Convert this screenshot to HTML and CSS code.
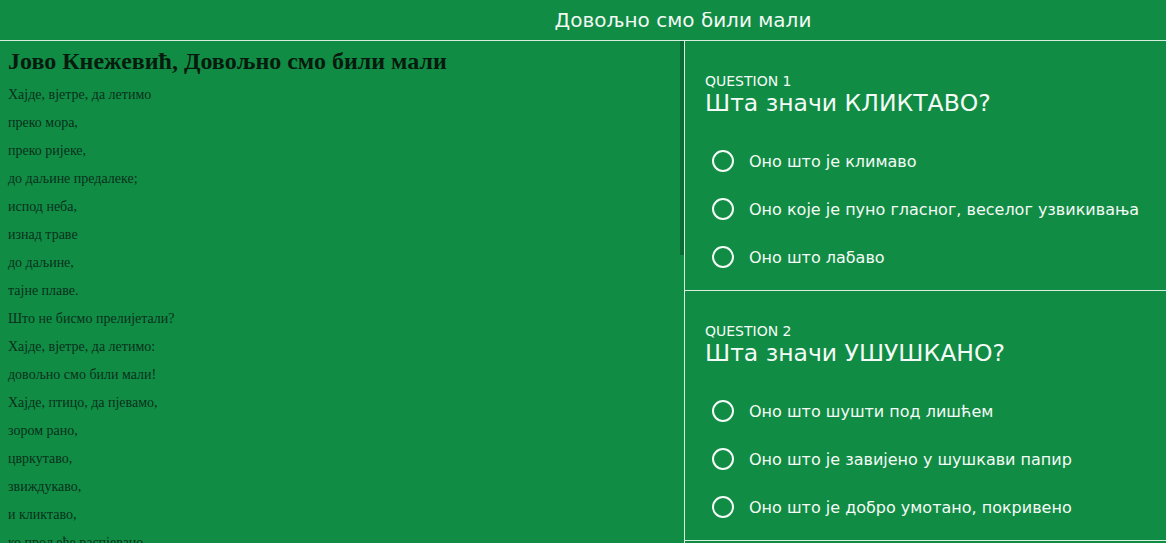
FILE: index.html
```html
<!DOCTYPE html>
<html lang="sr">
<head>
    <meta charset="UTF-8">
    <meta name="viewport" content="width=device-width, initial-scale=1.0">
    <title>Довољно смо били мали</title>
    <link rel="stylesheet" href="styles.css">
</head>
<body>
    <header class="top-bar">
        <h1 class="top-title">Довољно смо били мали</h1>
    </header>

    <main class="layout">
        <section class="reading">
            <h2 class="reading-title">Јово Кнежевић, Довољно смо били мали</h2>
            <div class="poem">
                <p>Хајде, вјетре, да летимо</p>
                <p>преко мора,</p>
                <p>преко ријеке,</p>
                <p>до даљине предалеке;</p>
                <p>испод неба,</p>
                <p>изнад траве</p>
                <p>до даљине,</p>
                <p>тајне плаве.</p>
                <p>Што не бисмо прелијетали?</p>
                <p>Хајде, вјетре, да летимо:</p>
                <p>довољно смо били мали!</p>
                <p>Хајде, птицо, да пјевамо,</p>
                <p>зором рано,</p>
                <p>цвркутаво,</p>
                <p>звиждукаво,</p>
                <p>и кликтаво,</p>
                <p>ко прољеће распјевано.</p>
            </div>
        </section>
        <span class="scroll-thumb"></span>

        <section class="quiz">
            <div class="question">
                <div class="question-label">QUESTION 1</div>
                <div class="question-text">Шта значи КЛИКТАВО?</div>
                <ul class="answers">
                    <li class="answer"><span class="radio"></span>Оно што је климаво</li>
                    <li class="answer"><span class="radio"></span>Оно које је пуно гласног, веселог узвикивања</li>
                    <li class="answer"><span class="radio"></span>Оно што лабаво</li>
                </ul>
            </div>

            <div class="question">
                <div class="question-label">QUESTION 2</div>
                <div class="question-text">Шта значи УШУШКАНО?</div>
                <ul class="answers">
                    <li class="answer"><span class="radio"></span>Оно што шушти под лишћем</li>
                    <li class="answer"><span class="radio"></span>Оно што је завијено у шушкави папир</li>
                    <li class="answer"><span class="radio"></span>Оно што је добро умотано, покривено</li>
                </ul>
            </div>
        </section>
    </main>
</body>
</html>
```

FILE: styles.css
```css
html, body {
    height: 100%;
}

body {
    margin: 0;
    background-color: #118c45;
    color: #f4fbf6;
    font-family: "DejaVu Sans", Verdana, sans-serif;
    overflow: hidden;
}

.top-bar {
    height: 40px;
    border-bottom: 1px solid #d8efe0;
    padding-left: 200px;
    display: flex;
    align-items: center;
    justify-content: center;
}

.top-title {
    margin: 0;
    font-size: 20px;
    font-weight: normal;
    color: #f1faf4;
}

.layout {
    display: flex;
    height: 502px;
    position: relative;
}

.reading {
    width: 685px;
    flex-shrink: 0;
    box-sizing: border-box;
    border-right: 1px solid #d8efe0;
    overflow: hidden;
    padding: 0 8px;
    font-family: "Liberation Serif", "Times New Roman", serif;
    color: #07301a;
}

/* scrollbar of the poem panel */
.scroll-thumb {
    position: absolute;
    left: 680px;
    top: 0;
    width: 4px;
    height: 214px;
    background: #0b6a34;
}

.reading-title {
    margin: 7px 0 12px;
    font-size: 24px;
    line-height: 27px;
    color: #061a0d;
}

.poem p {
    margin: 12px 0;
    font-size: 14px;
    line-height: 16px;
}

.quiz {
    flex: 1;
    min-width: 0;
    overflow: hidden;
}

.question {
    height: 250px;
    border-bottom: 1px solid #d8efe0;
    padding: 32px 20px 0;
    box-sizing: border-box;
}

.question-label {
    font-size: 14px;
    line-height: 16px;
}

.question-text {
    font-size: 23.5px;
    line-height: 28px;
}

.answers {
    list-style: none;
    margin: 20px 0 0;
    padding: 0 0 0 7px;
}

.answer {
    height: 48px;
    display: flex;
    align-items: center;
    font-size: 16px;
    white-space: nowrap;
}

.radio {
    width: 18px;
    height: 18px;
    border: 2px solid #f4fbf6;
    border-radius: 50%;
    margin-right: 15px;
    flex-shrink: 0;
}
```
